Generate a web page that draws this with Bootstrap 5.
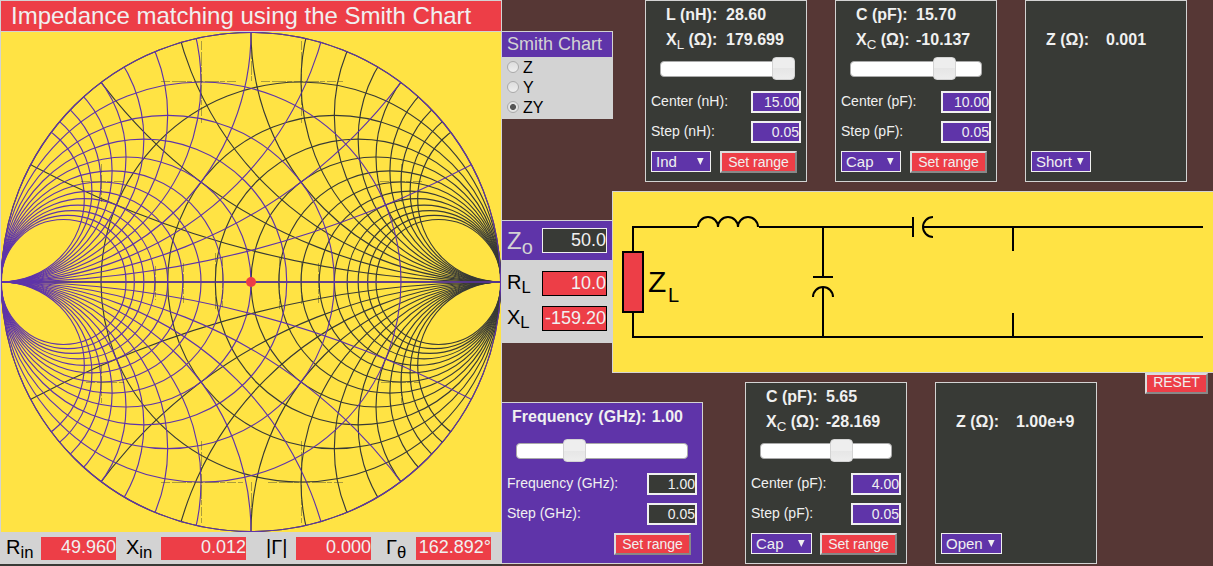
<!DOCTYPE html>
<html lang="en">
<head>
<meta charset="utf-8">
<title>Impedance matching using the Smith Chart</title>
<link href="https://cdn.jsdelivr.net/npm/bootstrap@5.3.0/dist/css/bootstrap.min.css" rel="stylesheet">
<style>
:root{--ink:#383a36;--violet:#5f34a9;--hot:#ed3e47;--sun:#ffe344;--edge:#d3d3d3;--pale:#f0f0f0}
body{background:#563735;font-family:"Liberation Sans",Arial,sans-serif;font-size:14px;line-height:1;width:1213px;height:566px;overflow:hidden;color:var(--pale)}
sub{bottom:-.27em;font-size:.833em;font-weight:400}
.left-col{width:502px;height:566px;background:var(--ink)}
.frame{border:1px solid var(--edge);border-bottom:0}
.title-bar{height:31px;background:var(--hot);font-size:24px;line-height:30px;padding-left:10px;margin:0;font-weight:400}
.plot{background:var(--sun);height:501px}
.plot svg,.circuit svg{display:block}
.readouts{height:32px;background:var(--edge);color:#000;font-size:20px}
.readouts label{height:32px;line-height:31px;white-space:nowrap}
.readouts output{height:23px;margin-top:5px;background:var(--hot);color:var(--pale);font-size:18px;line-height:21px;text-align:right;padding:0}
.right-col{width:711px}
.row-top{height:191px}.row-mid{height:182px}.row-low{height:193px}
.mode-box{width:111px;height:88px;margin-top:31px;background:var(--edge);border:1px solid var(--edge);border-left:0;color:#000;font-size:16px}
.mode-title{background:var(--violet);color:var(--edge);font-size:18px;height:25px;line-height:25px;padding-left:5px}
.mode-box label{height:20px;line-height:22px;padding-left:5px}
.mode-box input{appearance:none;width:12px;height:12px;margin:4px 4px 0 0;border:1px solid #aaa;border-radius:50%;background:linear-gradient(#ddd,#eee)}
.mode-box input:checked{background:radial-gradient(circle,#555 0 2.6px,#e4e4e4 3.4px)}
.part{width:162px;height:182px;background:var(--ink);border:1px solid var(--edge)}
.part-gap{margin-left:28px}
.read-head{font-size:16px;font-weight:700;white-space:nowrap}
.read-head>span{display:inline-block;width:60px}
.read-a,.read-b{height:25px;line-height:27px;padding-left:20px}
.track{position:relative;height:16px;margin:10px 14px 14px;background:#fff;border:1px solid #aaa;border-radius:4px}
.thumb{position:absolute;top:-5px;width:23px;height:23px;border:1px solid #d3d3d3;border-radius:4px;background:linear-gradient(#eee 0 50%,#e6e6e6 50%,#ededed)}
.fld{height:30px;padding:0 5px}
.fld label{line-height:20px}
.fld input{width:50px;height:22px;border:2px solid var(--pale);background:var(--violet);color:var(--pale);font-size:14px;line-height:18px;padding:0;text-align:right;border-radius:0}
.pick{width:60px;height:21px;border:1px solid var(--pale);background:var(--violet);color:var(--pale);font-size:15px;line-height:19px;padding:0 6px 0 4px;text-align:left}
.low-part .pick{width:61px}
.act{border:2px solid;border-color:#ddd #888 #888 #ddd;background:var(--hot);color:var(--pale);font-size:14px;line-height:18px;height:22px;padding:0;border-radius:0}
.w-set{width:77px}.fld .pick+.w-set{margin-left:auto;margin-right:4px}
.w-reset{width:63px;height:21px;line-height:15px;padding-bottom:2px}
.load-box{width:110px;margin-top:29px;height:123px;background:var(--edge);border-top:1px solid var(--edge);color:#000;font-size:20px}
.load-box span{line-height:22px}
.load-z{height:39px;background:var(--violet);color:var(--edge);font-size:24px}
.load-box input{width:65px;height:25px;border:1px solid #000;background:var(--hot);color:var(--pale);font-size:18px;line-height:23px;padding:0;text-align:right;margin-right:5px;border-radius:0}
.load-box .load-z input{border-color:var(--pale);background:var(--ink)}
.circuit{width:601px;height:182px;background:var(--sun);border:1px solid var(--edge);border-right:0}
.freq{width:201px;height:162px;margin-top:29px;background:var(--violet);border:1px solid var(--edge);border-left:0}
.freq input{background:var(--ink)}
.low-part{margin-top:9px}
</style>
</head>
<body class="d-flex">
<main class="left-col flex-shrink-0">
  <h1 class="title-bar frame">Impedance matching using the Smith Chart</h1>
  <div class="plot frame"><svg id="smith" width="500" height="500" viewBox="0 0 500 500"></svg></div>
  <div class="readouts d-flex">
    <label style="width:41px;padding-left:6px">R<sub>in</sub></label><output style="width:75px">49.960</output>
    <label style="width:45px;padding-left:10px">X<sub>in</sub></label><output style="width:85px">0.012</output>
    <label style="width:50px;padding-left:20px">|Γ|</label><output style="width:75px">0.000</output>
    <label style="width:45px;padding-left:15px">Γ<sub>θ</sub></label><output style="width:75px">162.892°</output>
  </div>
</main>
<section class="right-col flex-shrink-0">
  <div class="row-top d-flex">
    <div class="mode-box">
      <div class="mode-title">Smith Chart</div>
      <label class="d-flex"><input type="radio" name="mode">Z</label>
      <label class="d-flex"><input type="radio" name="mode">Y</label>
      <label class="d-flex"><input type="radio" name="mode" checked>ZY</label>
    </div>
    <div class="part" style="margin-left:32px">
      <div class="read-head read-a"><span>L (nH):</span>28.60</div>
      <div class="read-head read-b"><span>X<sub>L</sub> (Ω):</span>179.699</div>
      <div class="track"><div class="thumb" style="left:111px"></div></div>
      <div class="fld d-flex justify-content-between"><label>Center (nH):</label><input value="15.00"></div>
      <div class="fld d-flex justify-content-between"><label>Step (nH):</label><input value="0.05"></div>
      <div class="fld d-flex"><button class="pick d-flex justify-content-between"><span>Ind</span><svg width="7" height="19"><path d="M0 6h6.6L3.3 13z" fill="#f0f0f0"/></svg></button><button class="act w-set">Set range</button></div>
    </div>
    <div class="part part-gap">
      <div class="read-head read-a"><span>C (pF):</span>15.70</div>
      <div class="read-head read-b"><span>X<sub>C</sub> (Ω):</span>-10.137</div>
      <div class="track"><div class="thumb" style="left:82px"></div></div>
      <div class="fld d-flex justify-content-between"><label>Center (pF):</label><input value="10.00"></div>
      <div class="fld d-flex justify-content-between"><label>Step (pF):</label><input value="0.05"></div>
      <div class="fld d-flex"><button class="pick d-flex justify-content-between"><span>Cap</span><svg width="7" height="19"><path d="M0 6h6.6L3.3 13z" fill="#f0f0f0"/></svg></button><button class="act w-set">Set range</button></div>
    </div>
    <div class="part part-gap d-flex flex-column justify-content-between">
      <div class="read-head read-b" style="margin-top:25px"><span>Z (Ω):</span>0.001</div>
      <div class="fld"><button class="pick d-flex justify-content-between"><span>Short</span><svg width="7" height="19"><path d="M0 6h6.6L3.3 13z" fill="#f0f0f0"/></svg></button></div>
    </div>
  </div>
  <div class="row-mid d-flex">
    <div class="load-box">
      <div class="load-z d-flex justify-content-between align-items-center" style="padding-left:5px"><span>Z<sub>o</sub></span><input value="50.0"></div>
      <div class="d-flex justify-content-between" style="padding:11px 0 0 5px"><span>R<sub>L</sub></span><input value="10.0"></div>
      <div class="d-flex justify-content-between" style="padding:10px 0 0 5px"><span>X<sub>L</sub></span><input value="-159.20"></div>
    </div>
    <div class="circuit">
      <svg width="600" height="180" viewBox="613 192 600 180" fill="none" stroke="#000" stroke-width="2">
        <path d="M633 252V227H697M759 227H913M924 227H1203M633 312V337H1203"/>
        <path d="M698 227a10 10 0 0 1 20 0a10 10 0 0 1 20 0a10 10 0 0 1 20 0"/>
        <path d="M823 227V277M813 277H833M823 287V337M813 297a10 10 0 0 1 20 0M913 217V237M933 217a10 10 0 0 0 0 20M1013 227V251M1013 313V337"/>
        <rect x="623" y="252" width="20" height="60" fill="#ed3e47"/>
        <g fill="#000" stroke="none" font-family="Liberation Sans,sans-serif"><text x="648" y="292" font-size="30">Z</text><text x="668" y="302" font-size="20">L</text></g>
      </svg>
    </div>
  </div>
  <div class="row-low d-flex">
    <div class="freq">
      <div class="read-head" style="padding:5px 0 0 10px;height:27px;line-height:18px;word-spacing:1px">Frequency (GHz): 1.00</div>
      <div class="track" style="margin-top:13px"><div class="thumb" style="left:46px"></div></div>
      <div class="fld d-flex justify-content-between"><label>Frequency (GHz):</label><input value="1.00"></div>
      <div class="fld d-flex justify-content-between"><label>Step (GHz):</label><input value="0.05"></div>
      <div class="fld d-flex justify-content-end" style="padding-right:11px"><button class="act w-set">Set range</button></div>
    </div>
    <div class="part low-part" style="margin-left:42px">
      <div class="read-head read-a"><span>C (pF):</span>5.65</div>
      <div class="read-head read-b"><span>X<sub>C</sub> (Ω):</span>-28.169</div>
      <div class="track"><div class="thumb" style="left:69px"></div></div>
      <div class="fld d-flex justify-content-between"><label>Center (pF):</label><input value="4.00"></div>
      <div class="fld d-flex justify-content-between"><label>Step (pF):</label><input value="0.05"></div>
      <div class="fld d-flex"><button class="pick d-flex justify-content-between"><span>Cap</span><svg width="7" height="19"><path d="M0 6h6.6L3.3 13z" fill="#f0f0f0"/></svg></button><button class="act w-set">Set range</button></div>
    </div>
    <div class="part part-gap low-part d-flex flex-column justify-content-between">
      <div class="read-head read-b" style="margin-top:25px"><span>Z (Ω):</span>1.00e+9</div>
      <div class="fld"><button class="pick d-flex justify-content-between"><span>Open</span><svg width="7" height="19"><path d="M0 6h6.6L3.3 13z" fill="#f0f0f0"/></svg></button></div>
    </div>
    <button class="act w-reset" style="margin-left:48px">RESET</button>
  </div>
</section>
<script src="https://cdn.jsdelivr.net/npm/bootstrap@5.3.0/dist/js/bootstrap.bundle.min.js"></script>
<script>
// Resistance circles and reactance arcs, 0.25 to 3 in steps of 0.25; admittance grid is the mirror image.
const R = 250;
function grid(side, color) {
  let s = `<g stroke="${color}" fill="none" stroke-width="1.15">`;
  for (let k = 1; k <= 12; k++) {
    const v = k / 4;
    s += `<circle cx="${R + side * R * v / (1 + v)}" cy="${R}" r="${R / (1 + v)}"/>`;
    for (const q of [-1, 1]) s += `<circle cx="${R + side * R}" cy="${R + q * R / v}" r="${R / v}" clip-path="url(#rim)"/>`;
  }
  return s + `<circle cx="250" cy="250" r="249.6"/><path d="M0 250H500" stroke-width="1.8" stroke-opacity=".75"/></g>`;
}
document.getElementById('smith').innerHTML =
  `<defs><clipPath id="rim"><circle cx="250" cy="250" r="250"/></clipPath></defs>` +
  grid(1, '#383a36') + grid(-1, '#5f34a9') +
  `<g stroke="#383a36" stroke-width=".6" stroke-dasharray="9 2 14 1 5 2" opacity=".7">
  <path d="M200.5 9v82M300.5 9v82M200.5 409v82M300.5 409v82M160 49.5h76M260 49.5h82M160 450.5h82M267 450.5h76M100.5 132v38M400.5 132v38M100.5 333v38M400.5 333v38M80 149.5h42M379 149.5h42M85 350.5h38M380 350.5h38M278.5 225v52M300.5 230v42M317.5 231v40M214.5 221v56M221.5 225v50M182.5 231v40M154.5 234v34M250.5 18v32M250.5 450v32"/></g>` +
  `<circle cx="250" cy="250" r="5" fill="#ed3e47"/>`;
</script>
</body>
</html>
